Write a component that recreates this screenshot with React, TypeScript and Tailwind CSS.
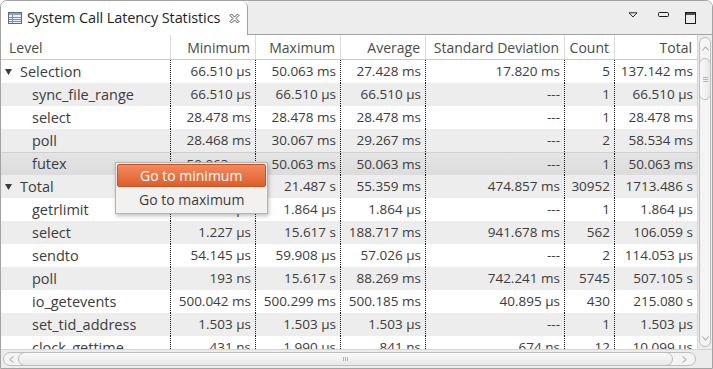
import React from "react";

type Row = { name: string; level: 0 | 1; vals: string[]; expand?: boolean };

const rows: Row[] = [
  { name: "Selection", level: 0, expand: true, vals: ["66.510 µs", "50.063 ms", "27.428 ms", "17.820 ms", "5", "137.142 ms"] },
  { name: "sync_file_range", level: 1, vals: ["66.510 µs", "66.510 µs", "66.510 µs", "---", "1", "66.510 µs"] },
  { name: "select", level: 1, vals: ["28.478 ms", "28.478 ms", "28.478 ms", "---", "1", "28.478 ms"] },
  { name: "poll", level: 1, vals: ["28.468 ms", "30.067 ms", "29.267 ms", "---", "2", "58.534 ms"] },
  { name: "futex", level: 1, vals: ["50.063 ms", "50.063 ms", "50.063 ms", "---", "1", "50.063 ms"] },
  { name: "Total", level: 0, expand: true, vals: ["193 ns", "21.487 s", "55.359 ms", "474.857 ms", "30952", "1713.486 s"] },
  { name: "getrlimit", level: 1, vals: ["1.864 µs", "1.864 µs", "1.864 µs", "---", "1", "1.864 µs"] },
  { name: "select", level: 1, vals: ["1.227 µs", "15.617 s", "188.717 ms", "941.678 ms", "562", "106.059 s"] },
  { name: "sendto", level: 1, vals: ["54.145 µs", "59.908 µs", "57.026 µs", "---", "2", "114.053 µs"] },
  { name: "poll", level: 1, vals: ["193 ns", "15.617 s", "88.269 ms", "742.241 ms", "5745", "507.105 s"] },
  { name: "io_getevents", level: 1, vals: ["500.042 ms", "500.299 ms", "500.185 ms", "40.895 µs", "430", "215.080 s"] },
  { name: "set_tid_address", level: 1, vals: ["1.503 µs", "1.503 µs", "1.503 µs", "---", "1", "1.503 µs"] },
  { name: "clock_gettime", level: 1, vals: ["431 ns", "1.990 µs", "841 ns", "674 ns", "12", "10.099 µs"] },
];

const widths = ["w-[85px]", "w-[85px]", "w-[85px]", "w-[139px]", "w-[50px]", "w-[82px]"];
const headers = ["Minimum", "Maximum", "Average", "Standard Deviation", "Count", "Total"];

function TableIcon() {
  return (
    <svg width="14" height="12" viewBox="0 0 14 12" className="shrink-0">
      <rect x="0.5" y="0.5" width="13" height="11" fill="#eef2f7" stroke="#5a6b80" />
      <rect x="1" y="1" width="12" height="2" fill="#8fa3bb" />
      <line x1="1" y1="5.5" x2="13" y2="5.5" stroke="#7f8fa3" />
      <line x1="1" y1="7.5" x2="13" y2="7.5" stroke="#7f8fa3" />
      <line x1="1" y1="9.5" x2="13" y2="9.5" stroke="#7f8fa3" />
      <line x1="4.5" y1="3" x2="4.5" y2="11" stroke="#7f8fa3" />
    </svg>
  );
}

function CloseIcon() {
  return (
    <svg width="11" height="11" viewBox="0 0 11 11" className="shrink-0">
      <path
        d="M1 2.5 L2.5 1 L5.5 4 L8.5 1 L10 2.5 L7 5.5 L10 8.5 L8.5 10 L5.5 7 L2.5 10 L1 8.5 L4 5.5 Z"
        fill="#ffffff"
        stroke="#3c3c3c"
        strokeWidth="0.9"
        strokeLinejoin="round"
      />
    </svg>
  );
}

export default function App() {
  return (
    <div
      className="relative w-[713px] h-[369px] bg-white text-[13.5px] text-[#3c3c3c] overflow-hidden"
      style={{ fontFamily: '"Open Sans", "Noto Sans", sans-serif' }}
    >
      <div className="flex flex-col h-full border border-[#a3a3a3] rounded-t-[7px] overflow-hidden bg-white">
        {/* Tab bar */}
        <div className="flex h-[34px] shrink-0">
          <div className="flex items-center gap-[5px] w-[247px] pl-[7px] pb-[1px] bg-white border-r border-[#a3a3a3] rounded-tr-[6px] rounded-tl-[6px]">
            <TableIcon />
            <span className="text-[14.5px] text-[#1e1e1e] tracking-[-0.1px]">System Call Latency Statistics</span>
            <span className="ml-[4px] mt-[1px]"><CloseIcon /></span>
          </div>
          <div className="flex-1 flex items-center justify-end gap-[16px] pr-[16px] bg-[#ededed] border-b border-[#a3a3a3]">
            <svg width="10" height="6" viewBox="0 0 10 6" className="mb-[5px]">
              <path d="M1 0.8 L9 0.8 L5 5 Z" fill="none" stroke="#2a2a2a" strokeWidth="1" />
            </svg>
            <svg width="11" height="6" viewBox="0 0 11 6" className="mb-[5px] ml-[4px]">
              <rect x="0.5" y="0.5" width="10" height="4" rx="1" fill="none" stroke="#1a1a1a" strokeWidth="1" />
            </svg>
            <svg width="11" height="12" viewBox="0 0 11 12" className="mt-[1px]">
              <rect x="0.5" y="0.5" width="10" height="11" fill="none" stroke="#1a1a1a" strokeWidth="1" />
              <line x1="0.5" y1="2" x2="10.5" y2="2" stroke="#1a1a1a" strokeWidth="1.5" />
            </svg>
          </div>
        </div>

        {/* Body */}
        <div className="flex-1 flex flex-col min-h-0">
          <div className="flex flex-1 min-h-0">
            <div className="w-[696px] flex flex-col overflow-hidden">
              {/* Header */}
              <div className="flex h-[25px] shrink-0 border-b border-[#c9c9c9] text-[#4a4a4a] text-[14px]">
                <div className="w-[170px] border-r border-[#dcdcdc] flex items-center pl-[8px] pt-[1px]">Level</div>
                {headers.map((h, i) => (
                  <div
                    key={h}
                    className={`${widths[i]} ${i < 5 ? "border-r border-[#dcdcdc]" : ""} flex items-center justify-end pr-[5px] pt-[1px] whitespace-nowrap`}
                  >
                    {h}
                  </div>
                ))}
              </div>
              {/* Rows */}
              {rows.map((r, idx) => {
                const selected = idx === 4;
                const bg = selected
                  ? "bg-gradient-to-b from-[#e4e4e4] to-[#dcdcdc] border-t border-[#cfcfcf]"
                  : idx % 2 === 1
                  ? "bg-[#ededed]"
                  : "bg-white";
                return (
                  <div key={idx} className={`flex h-[23px] shrink-0 ${bg}`}>
                    <div className="w-[170px] border-r border-dotted border-[#1a1a1a] flex items-center text-[14.5px]">
                      {r.level === 0 ? (
                        <>
                          <span className="w-[19px] pl-[4px] flex items-center">
                            <svg width="7" height="6" viewBox="0 0 7 6">
                              <path d="M0 0 L7 0 L3.5 6 Z" fill="#3c3c3c" />
                            </svg>
                          </span>
                          <span>{r.name}</span>
                        </>
                      ) : (
                        <span className="pl-[31px]">{r.name}</span>
                      )}
                    </div>
                    {r.vals.map((v, i) => (
                      <div
                        key={i}
                        className={`${widths[i]} ${i < 5 ? "border-r border-dotted border-[#1a1a1a]" : ""} flex items-center justify-end pr-[4px] whitespace-nowrap`}
                      >
                        {v}
                      </div>
                    ))}
                  </div>
                );
              })}
            </div>
            {/* Vertical scrollbar */}
            <div className="w-[15px] flex flex-col bg-[#ececec] border-l border-[#d5d5d5] pt-[2px] pb-[2px] items-center">
              <div className="w-[12px] flex-1 flex flex-col rounded-[6px] border border-[#bdbdbd] bg-[#f4f4f4] overflow-hidden">
                <div className="h-[20px] flex items-center justify-center">
                  <svg width="7" height="5" viewBox="0 0 7 5">
                    <path d="M0.5 4.5 L3.5 0.8 L6.5 4.5" fill="none" stroke="#9a9a9a" />
                  </svg>
                </div>
                <div className="h-[42px] mx-[-1px] rounded-[6px] border border-[#bdbdbd] bg-gradient-to-r from-[#fafafa] to-[#e8e8e8] flex flex-col items-center justify-center gap-[1px]">
                  <div className="w-[5px] h-[1px] bg-[#b5b5b5]" />
                  <div className="w-[5px] h-[1px] bg-[#b5b5b5]" />
                  <div className="w-[5px] h-[1px] bg-[#b5b5b5]" />
                </div>
                <div className="flex-1" />
                <div className="h-[16px] flex items-center justify-center">
                  <svg width="7" height="5" viewBox="0 0 7 5">
                    <path d="M0.5 0.5 L3.5 4.2 L6.5 0.5" fill="none" stroke="#9a9a9a" />
                  </svg>
                </div>
              </div>
            </div>
          </div>
          {/* Horizontal scrollbar */}
          <div className="h-[19px] shrink-0 flex bg-[#ececec] border-t border-[#d5d5d5] pl-[2px] pr-[16px] py-[2px]">
            <div className="flex-1 flex rounded-[7px] border border-[#bdbdbd] bg-[#f4f4f4] overflow-hidden">
              <div className="w-[14px] flex items-center justify-center">
                <svg width="5" height="7" viewBox="0 0 5 7">
                  <path d="M4.5 0.5 L0.8 3.5 L4.5 6.5" fill="none" stroke="#9a9a9a" />
                </svg>
              </div>
              <div className="flex-1 my-[-1px] rounded-[7px] border border-[#bdbdbd] bg-gradient-to-b from-[#fafafa] to-[#e8e8e8] flex items-center justify-center gap-[1px]">
                <div className="w-[1px] h-[4px] bg-[#b5b5b5]" />
                <div className="w-[1px] h-[4px] bg-[#b5b5b5]" />
                <div className="w-[1px] h-[4px] bg-[#b5b5b5]" />
              </div>
              <div className="w-[22px] flex items-center justify-center">
                <svg width="5" height="7" viewBox="0 0 5 7">
                  <path d="M0.5 0.5 L4.2 3.5 L0.5 6.5" fill="none" stroke="#9a9a9a" />
                </svg>
              </div>
            </div>
          </div>
        </div>
      </div>

      {/* Context menu */}
      <div className="absolute left-[115px] top-[162px] w-[153px] bg-[#f2f1f0] border border-[#b4b4b4] shadow-[1px_2px_4px_rgba(0,0,0,0.25)] py-[1px] text-[14px]">
        <div className="mx-[1px] h-[23px] flex items-center pl-[22px] text-white bg-gradient-to-b from-[#f08a5d] to-[#e05e2a] border border-[#c9501f] rounded-[2px]">
          Go to minimum
        </div>
        <div className="h-[25px] flex items-center pl-[23px] text-[#3c3c3c]">Go to maximum</div>
      </div>
    </div>
  );
}
